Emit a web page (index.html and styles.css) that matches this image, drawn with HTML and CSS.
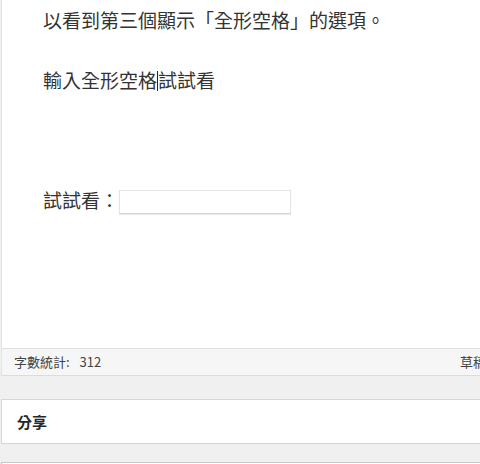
FILE: index.html
```html
<!DOCTYPE html>
<html lang="zh-Hant">
<head>
<meta charset="utf-8">
<title>編輯器</title>
<link rel="stylesheet" href="styles.css">
</head>
<body>
<div class="wrap">
  <div class="editor">
    <div class="content">
      <p>以看到第三個顯示「全形空格」的選項。</p>
      <p>輸入全形空格<span class="caret"></span>試試看</p>
      <p>&nbsp;</p>
      <p>試試看：<input class="field" type="text"></p>
    </div>
    <div class="status">
      <span class="count">字數統計: 312</span>
      <span class="saved">草稿儲存於下午 3:15:20</span>
    </div>
  </div>
  <div class="box">
    <h2 class="box-title">分享</h2>
  </div>
  <div class="box next"></div>
</div>
</body>
</html>
```

FILE: styles.css
```css
html, body {
  margin: 0;
  padding: 0;
}
body {
  background: #f0f0f0;
  overflow: hidden;
  width: 480px;
  height: 464px;
  font-family: "Liberation Sans", "Noto Sans CJK TC", sans-serif;
  color: #333;
}
.wrap {
  width: 660px;
  padding-left: 1px;
}
.editor {
  border-left: 1px solid #e2e2e2;
  background: #fff;
}
.content {
  box-sizing: border-box;
  height: 348px;
  padding: 5px 0 0 41px;
  font-family: "Noto Sans CJK TC", sans-serif;
  font-size: 19px;
  color: #333;
}
.content p {
  margin: 0 0 30px;
  line-height: 30px;
  height: 30px;
  white-space: nowrap;
}
.caret {
  display: inline-block;
  width: 0;
  height: 20px;
  border-left: 1.5px solid #222;
  vertical-align: -3px;
}
.field {
  box-sizing: border-box;
  width: 172px;
  height: 24px;
  margin: 0;
  padding: 0 4px;
  border: 1px solid #e4e4e4;
  border-bottom-color: #d4d4d4;
  background: #fff;
  box-shadow: 0 1px 1px rgba(0, 0, 0, 0.08);
  vertical-align: middle;
  position: relative;
  top: -1px;
}
.status {
  box-sizing: border-box;
  height: 28px;
  display: grid;
  grid-template-columns: 446px auto;
  align-items: center;
  padding-left: 12px;
  background: #f6f6f6;
  border-top: 1px solid #dedede;
  border-bottom: 1px solid #dcdcdc;
  border-right: 1px solid #dcdcdc;
  font-family: "Noto Sans CJK TC", sans-serif;
  font-size: 13px;
  color: #444;
  line-height: 26px;
  word-spacing: 7px;
}
.saved {
  word-spacing: 0;
}
.box {
  box-sizing: border-box;
  height: 45px;
  margin-top: 23px;
  background: #fff;
  border: 1px solid #d6d6d6;
  display: flex;
  align-items: center;
  padding-left: 15px;
}
.box-title {
  margin: 0;
  font-family: "Noto Sans CJK TC", sans-serif;
  font-size: 15px;
  font-weight: 700;
  color: #23282d;
  line-height: 20px;
}
.box.next {
  margin-top: 18px;
  border-color: #c8c8c8;
}
```
